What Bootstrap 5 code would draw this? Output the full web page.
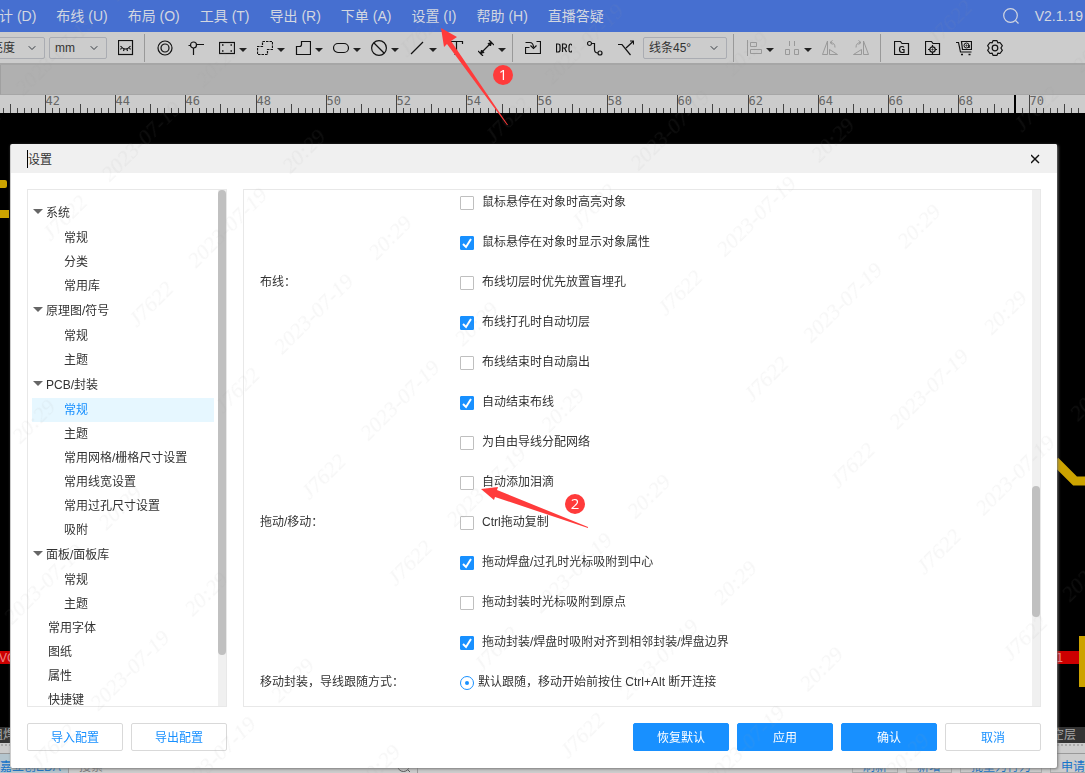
<!DOCTYPE html>
<html lang="zh-CN">
<head>
<meta charset="utf-8">
<meta name="viewport" content="width=device-width, initial-scale=1">
<title>设置</title>
<link href="https://cdn.jsdelivr.net/npm/bootstrap@5.3.0/dist/css/bootstrap.min.css" rel="stylesheet">
<style>
  body { font: 12px/18px "Liberation Sans", "Noto Sans CJK SC", sans-serif; color: #333; background: #000; }
  svg { display: block; flex: none; }

  .app-menu { height: 32px; background: #466fd0; font-size: 14px; padding-right: 2px; }
  .app-menu a, .app-menu button { color: #d3d7e0; text-decoration: none; white-space: nowrap; }
  .menu-list { gap: 20px; margin-left: -15px; }
  .bare { border: 0; padding: 0; background: none; color: inherit; }

  .tool-row { height: 33px; background: #ccc; border-bottom: 2px solid #a6a6a6; overflow: hidden; }
  .tool-row .form-select { height: 22px; flex: none; padding: 1px 20px 0 5px; font-size: 12px; line-height: 18px; color: #333;
    border: 1px solid #aaacb2; border-radius: 2px; background-color: #ccc; background-position: right 8px center; background-size: 8px; }
  .tool-row .layer-pick { width: 61px; margin-left: -16px; padding-left: 6px; }
  .unit-pick { width: 58px; }
  .tool-row .angle-pick { width: 84px; margin-left: 9px; }
  .hide-tool { margin: 0 10px 0 11px; }
  .tool-group { gap: 15px; }
  .drop-group { gap: 10px; }
  .tool { display: flex; align-items: center; gap: 4px; color: #111; }
  .tool svg.glyph { fill: none; stroke: currentColor; stroke-width: 1; }
  .tool.off svg.glyph { color: #999; }
  .arrow-down { border: 4px solid transparent; border-top-color: #222; border-bottom: 0; margin-top: 4px; }
  .divider { width: 1px; height: 28px; margin: 0 12px 0 6px; background: #999; flex: none; }
  .divider.lead-in { margin-left: 0; }
  .divider.wide { margin: 0 13px 0 11px; }

  .tab-strip { height: 30px; background: #b0b0b0; border-left: 1px solid #a0a0a0; border-bottom: 1px solid #a6a6a6; }
  .ruler { height: 18px; background: #ccc; overflow: hidden; }
  .ruler text { font: 12px "DejaVu Sans Mono", monospace; fill: #666; }

  .layer-bar { height: 16px; background: #333; color: #aaa; line-height: 17px; overflow: hidden; }
  .layer-bar span:first-child { margin-left: -9px; }
  .layer-bar span:last-child { margin-right: 9px; }
  .grip { height: 11px; background: radial-gradient(circle, #aaa 1px, transparent 1px) 0 0 / 4px 4px repeat-x, #ccc; border-bottom: 1px solid #999; }
  .dock { height: 19px; background: #ccc; overflow: hidden; line-height: 27px; color: #666; }
  .dock a, .dock button { color: #1673c9; text-decoration: none; line-height: 27px; }
  .dock-name { background: #b4c5ce; width: 69px; border-right: 1px solid #999; }
  .dock-search { width: 349px; padding: 0 6px 0 10px; border-right: 1px solid #999; }
  .dock-search input { border: 0; background: none; width: 100%; padding: 0; font-size: 12px; height: 27px; }
  .dock-search input::placeholder { color: #777; }
  .dock-actions { gap: 8px; }
  .dock-actions button { border: 1px solid #aaa; border-top: 0; padding: 0 10px; background: #ccc; white-space: nowrap; }
  .dock-actions button:last-child { padding-right: 0; border-right: 0; }

  .settings .modal-dialog { margin: 144px 28px 5px 10px; max-width: none; height: calc(100% - 149px); }
  .settings .modal-content { height: 100%; border: 0; border-left: 1px solid #ccc; border-radius: 2px; box-shadow: 1px 1px 3px #777; color: #333; }
  .settings .modal-header { height: 29px; padding: 0 17px 0 16px; background: #f0f0f0; border: 0; border-radius: 2px 2px 0 0; }
  .settings .modal-title { font-size: 12px; font-weight: 400; line-height: 16px; padding-top: 2px; border-left: 1px solid #000; }
  .settings .modal-body { padding: 16px; gap: 16px; min-height: 0; }
  .settings .modal-footer { padding: 0 16px 17px; gap: 8px; border: 0; }
  .settings .modal-footer > * { margin: 0; }
  .settings .btn { width: 96px; height: 28px; padding: 1px 0 0; font-size: 12px; line-height: 26px; border-radius: 2px; }
  .btn-fill { background: #1890ff; border-color: #1890ff; color: #fff; }
  .btn-line { background: #fff; border-color: #d9d9d9; color: #1890ff; }

  .pane { border: 1px solid #e8e8e8; min-height: 0; overflow: hidden; }
  .tree-pane { width: 200px; flex: none; }
  .tree { padding: 10px 4px 0; }
  .tree ul { padding: 0; margin: 0; list-style: none; }
  .tree a { display: block; height: 24px; line-height: 25px; padding-left: 16px; color: #333; text-decoration: none; white-space: nowrap; }
  .tree ul ul a { padding-left: 32px; }
  .tree a.active { background: #e6f7ff; color: #1890ff; }
  .branch { display: flex; align-items: center; gap: 3px; height: 26px; padding: 1px 0 0 1px; line-height: 25px; }
  .branch::before { content: ""; border: 5px solid transparent; border-top-color: #666; border-bottom: 0; margin-bottom: 4px; }
  .track { width: 8px; background: #f0f0f0; flex: none; }
  .thumb { background: #c0c0c0; border-radius: 4px; }
  .tree-thumb { height: 465px; }
  .form-thumb { height: 131px; margin-top: 296px; }

  .options { margin-top: -8px; padding-left: 16px; }
  .opt-row { height: 40px; }
  .opt-name { width: 200px; flex: none; }
  .opt-row .form-check-input { width: 14px; height: 14px; margin: 2px 8px 0 0; border: 1px solid #bfbfbf; float: none; flex: none; background-size: 14px; }
  .opt-row .form-check-input[type=checkbox] { border-radius: 1px; }
  .opt-row .form-check-input:checked { border-color: #1890ff; background-color: #1890ff; }
  .opt-row .form-check-input:checked[type=checkbox] { background-image: url("data:image/svg+xml,%3csvg xmlns='http://www.w3.org/2000/svg' viewBox='0 0 14 14'%3e%3cpath fill='none' stroke='%23fff' stroke-width='2' d='M3 8l3 3 5-8'/%3e%3c/svg%3e"); }
  .opt-row .form-check-input:checked[type=radio] { background-color: #fff; margin-right: 4px; background-image: url("data:image/svg+xml,%3csvg xmlns='http://www.w3.org/2000/svg' viewBox='0 0 14 14'%3e%3ccircle cx='7' cy='7' r='2' fill='%231890ff'/%3e%3c/svg%3e"); }

  .overlay { position: fixed; inset: 0; width: 100%; height: 100%; z-index: 1100; pointer-events: none; }
  .overlay .mark-no { font: 15px "Open Sans", sans-serif; fill: #fff; text-anchor: middle; }
  .overlay .stamp { font: italic 22px "Liberation Serif", "Noto Sans CJK SC", serif; fill: #a0a0a0; fill-opacity: .09; text-anchor: middle; }
</style>
</head>
<body class="vh-100 d-flex flex-column overflow-hidden">

<header class="app-menu d-flex align-items-center justify-content-between">
  <nav class="menu-list d-flex">
    <a href="#">设计 (D)</a><a href="#">布线 (U)</a><a href="#">布局 (O)</a><a href="#">工具 (T)</a><a href="#">导出 (R)</a><a href="#">下单 (A)</a><a href="#">设置 (I)</a><a href="#">帮助 (H)</a><a href="#">直播答疑</a>
  </nav>
  <div class="d-flex align-items-center gap-3">
    <button class="bare" type="button" aria-label="搜索"><svg width="16" height="16" fill="none" stroke="currentColor" stroke-width="1.200"><circle cx="7.500" cy="7.500" r="6.800"/><path d="M12.500 12.500l3 3"/></svg></button>
    <a href="#">V2.1.19</a>
  </div>
</header>

<div class="tool-row d-flex align-items-center">
  <select class="form-select layer-pick" aria-label="亮度"><option>亮度</option></select>
  <select class="form-select unit-pick ms-1" aria-label="单位"><option>mm</option></select>
  <button class="bare tool hide-tool" type="button" aria-label="隐藏"><svg class="glyph" width="16" height="16"><rect x=".5" y=".5" width="14" height="14" stroke-width="1.200"/><path d="M2.500 6c3 4 7 4 10 0M3.500 8l-1 1.500M6 9l-.5 2M9 9l.5 2M11.500 8l1 1.500" stroke-width="1.200"/></svg></button>
  <span class="divider lead-in"></span>
  <div class="tool-group d-flex align-items-center">
    <button class="bare tool" type="button" aria-label="焊盘"><svg class="glyph" width="16" height="16"><circle cx="8" cy="8" r="7" stroke-width="1.200"/><circle cx="8" cy="8" r="4" stroke-width="1.200"/></svg></button>
    <button class="bare tool" type="button" aria-label="过孔"><svg class="glyph" width="16" height="16"><circle cx="5.500" cy="5" r="3" stroke-width="1.200"/><path d="M8.500 4.500H16M5.500 8v7M2 5.500H.5" stroke-width="1.200"/></svg></button>
    <div class="drop-group d-flex align-items-center">
      <button class="bare tool" type="button" aria-label="板框"><svg class="glyph" width="16" height="16"><rect x=".5" y="2.500" width="15" height="11" stroke-width="1.200"/><path d="M3 5h1.500M11.500 5H13M3 11h1.500M11.500 11H13" stroke-width="1.500"/></svg><span class="arrow-down"></span></button>
      <button class="bare tool" type="button" aria-label="区域"><svg class="glyph" width="16" height="16"><path d="M5.500 1.500h10v8h-5v5h-10v-8h5z" stroke-width="1.200" stroke-dasharray="2.500 1"/></svg><span class="arrow-down"></span></button>
      <button class="bare tool" type="button" aria-label="铺铜"><svg class="glyph" width="16" height="16"><path d="M6.500 1.500h9v13H1.500v-8h3q2 0 2-2z" stroke-width="1.200"/></svg><span class="arrow-down"></span></button>
      <button class="bare tool" type="button" aria-label="槽"><svg class="glyph" width="16" height="16"><rect x=".5" y="3.500" width="15" height="9" rx="4.500" stroke-width="1.200"/></svg><span class="arrow-down"></span></button>
      <button class="bare tool" type="button" aria-label="禁止区域"><svg class="glyph" width="16" height="16"><circle cx="8" cy="8" r="7.400" stroke-width="1.200"/><path d="M3 3l10 10" stroke-width="1.200"/></svg><span class="arrow-down"></span></button>
      <button class="bare tool" type="button" aria-label="折线"><svg class="glyph" width="16" height="16"><path d="M2 14L14 2" stroke-width="1.200"/></svg><span class="arrow-down"></span></button>
      <button class="bare tool me-1" type="button" aria-label="文本"><svg class="glyph" width="17" height="16"><path d="M3.500 4V1.500h12V4M9.500 1.500v13M7.500 14.500h4" stroke-width="1.200"/></svg></button>
      <button class="bare tool" type="button" aria-label="尺寸"><svg class="glyph" width="16" height="16"><path d="M2 14L14 2M0 11l5 5M11 0l5 5" stroke-width="1.200"/><path d="M2.500 13.500l1-3.500 2.500 2.500zM13.500 2.500l-1 3.500L10 3.500z" fill="currentColor"/></svg><span class="arrow-down"></span></button>
    </div>
  </div>
  <span class="divider"></span>
  <div class="tool-group d-flex align-items-center">
    <button class="bare tool" type="button" aria-label="导入"><svg class="glyph" width="16" height="16"><path d="M4.500 7.500H.5v6h15v-12h-4M.5 2.500h4q4 0 4 5" stroke-width="1.200"/><path d="M5.500 5.500l3 3 3-3" stroke-width="1.200"/></svg></button>
    <button class="bare tool" type="button" aria-label="DRC"><svg class="glyph" width="16" height="16"><path d="M.5 4v8h1.500q2 0 2-2V6q0-2-2-2zM6.500 12V4h2.500q1.500 0 1.500 2t-1.500 2H6.500M8.500 8l2 4M16 5.500Q15.500 4 14.500 4T13 6v4q0 2 1.500 2t1.500-1.500" stroke-width="1.200"/></svg></button>
    <button class="bare tool" type="button" aria-label="布线"><svg class="glyph" width="16" height="16"><circle cx="2.500" cy="3.500" r="2" stroke-width="1.200"/><circle cx="13" cy="13" r="2" stroke-width="1.200"/><path d="M4.500 3.500h3v6q0 3.500 3.500 3.500" stroke-width="1.200"/></svg></button>
    <button class="bare tool" type="button" aria-label="推挤"><svg class="glyph" width="16" height="16"><path d="M0 4.500h4L12.500 15M8 8l7-6.500M12 1h3.500v3.500" stroke-width="1.200"/></svg></button>
  </div>
  <select class="form-select angle-pick" aria-label="线条角度"><option>线条45°</option></select>
  <span class="divider"></span>
  <div class="tool-group d-flex align-items-center">
    <div class="drop-group d-flex">
      <button class="bare tool off" type="button" aria-label="对齐"><svg class="glyph" width="16" height="16"><path d="M1.500 0v16M4.500 2.500h6v4h-6zM4.500 9.500h11v4h-11z"/></svg><span class="arrow-down"></span></button>
      <button class="bare tool off" type="button" aria-label="分布"><svg class="glyph" width="16" height="16"><path d="M5.500 1v5M10.500 1v5M1.500 9.500h4v5h-4zM10.500 9.500h4v5h-4z"/></svg><span class="arrow-down"></span></button>
      <button class="bare tool off" type="button" aria-label="左转"><svg class="glyph" width="16" height="16"><path d="M5.500 1v13.500h-5zM7.500 14.500v-5l8 5zM8 2.500q5 0 5 5M10.500.5l-2.500 2 2.500 2"/></svg></button>
    </div>
    <button class="bare tool off" type="button" aria-label="右转"><svg class="glyph" width="16" height="16"><path d="M10.500 1v13.500h5zM8.500 14.500v-5l-8 5zM8 2.500q-5 0-5 5M5.500.5l2.500 2-2.500 2"/></svg></button>
  </div>
  <span class="divider wide"></span>
  <div class="tool-group d-flex align-items-center">
    <button class="bare tool" type="button" aria-label="Gerber"><svg class="glyph" width="16" height="16"><path d="M.5 14.500V1.500h6l1.500 2h6.500v11zM10 7.500Q9.500 6.500 8 6.500q-2.500 0-2.500 3t2.500 3h2v-3H8" stroke-width="1.200"/></svg></button>
    <button class="bare tool" type="button" aria-label="坐标文件"><svg class="glyph" width="16" height="16"><path d="M.5 14.500V1.500h6l1.500 2h6.500v11zM7.500 5v2M7.500 12v2M3 9.500h2M10 9.500h2" stroke-width="1.200"/><circle cx="7.500" cy="9.500" r="2.700" stroke-width="1.200"/><circle cx="7.500" cy="9.500" r=".6"/></svg></button>
    <button class="bare tool" type="button" aria-label="下单"><svg class="glyph" width="16" height="16"><path d="M0 2.500h2.500l2 9.500h11M5.500 1.500h10v8H6.500z" stroke-width="1.200"/><circle cx="10.500" cy="5.500" r="2.500"/><circle cx="10.500" cy="5.500" r=".6"/><path d="M13 5v3M5 14.500h2M12.500 14.500h2" stroke-width="1.500"/></svg></button>
    <button class="bare tool" type="button" aria-label="设置"><svg class="glyph" width="16" height="16"><path d="M6 .6h4l.8 2.200 2.200-.3 2.300 3.200-1.400 2.300 1.400 2.300-2.300 3.200-2.200-.3-.8 2.200H6l-.8-2.200-2.200.3-2.300-3.200L2.100 8 .7 5.700 3 2.500l2.200.3z" stroke-width="1.200" stroke-linejoin="round"/><circle cx="8" cy="8" r="2.800" stroke-width="1.200"/></svg></button>
  </div>
</div>

<div class="tab-strip"></div>
<div class="ruler"><svg id="ruler" width="100%" height="18" aria-hidden="true"></svg></div>

<main class="flex-grow-1 d-flex justify-content-between overflow-hidden">
  <svg width="40" height="614"><path d="M0 67h5q2 0 2 2v4q0 2-2 2H0zM0 97h9v8H0z" fill="#cca300"/><path d="M0 538h40v13H0z" fill="#c00"/><text x="-1" y="549" font-size="12" fill="#e88">VCC</text></svg>
  <svg width="85" height="614"><path d="M55 348l20 20h10" fill="none" stroke="#cca300" stroke-width="9"/><path d="M0 538h79v13H0z" fill="#c00"/><path d="M79 523h6v51h-6z" fill="#cca300"/><text x="56" y="549" font-family="DejaVu Sans Mono" font-size="12" fill="#e88">1</text></svg>
</main>

<div class="layer-bar d-flex justify-content-between"><span>阻焊</span><span>挖空层</span></div>
<div class="grip"></div>
<footer class="dock d-flex">
  <a class="dock-name" href="#">嘉立创EDA</a>
  <div class="dock-search d-flex align-items-start"><input type="text" placeholder="搜索" aria-label="搜索"><svg class="mt-1" width="14" height="14" fill="none" stroke="#555"><circle cx="6.500" cy="7.500" r="6"/><path d="M10.500 11.500l3 3"/></svg></div>
  <div class="dock-actions d-flex ms-auto"><button type="button">刷新</button><button type="button">新增</button><button type="button">批量为行为</button><button type="button">申请</button></div>
</footer>

<div class="modal settings d-block overflow-hidden" tabindex="-1" role="dialog" aria-labelledby="settings-title">
  <div class="modal-dialog">
    <div class="modal-content">
      <div class="modal-header">
        <h1 class="modal-title" id="settings-title">设置</h1>
        <button class="bare" type="button" aria-label="关闭"><svg width="9" height="10" stroke="#111" stroke-width="1.400"><path d="M0 1l8 8M8 1L0 9"/></svg></button>
      </div>
      <div class="modal-body d-flex">
        <div class="pane tree-pane d-flex">
          <nav class="tree flex-grow-1">
            <ul>
              <li><button class="bare branch" type="button">系统</button>
                <ul><li><a href="#">常规</a></li><li><a href="#">分类</a></li><li><a href="#">常用库</a></li></ul></li>
              <li><button class="bare branch" type="button">原理图/符号</button>
                <ul><li><a href="#">常规</a></li><li><a href="#">主题</a></li></ul></li>
              <li><button class="bare branch" type="button">PCB/封装</button>
                <ul><li><a class="active" href="#">常规</a></li><li><a href="#">主题</a></li><li><a href="#">常用网格/栅格尺寸设置</a></li><li><a href="#">常用线宽设置</a></li><li><a href="#">常用过孔尺寸设置</a></li><li><a href="#">吸附</a></li></ul></li>
              <li><button class="bare branch" type="button">面板/面板库</button>
                <ul><li><a href="#">常规</a></li><li><a href="#">主题</a></li></ul></li>
              <li><a href="#">常用字体</a></li><li><a href="#">图纸</a></li><li><a href="#">属性</a></li><li><a href="#">快捷键</a></li>
            </ul>
          </nav>
          <div class="track"><div class="thumb tree-thumb"></div></div>
        </div>
        <div class="pane flex-grow-1 d-flex">
          <form class="options flex-grow-1">
            <div class="opt-row d-flex align-items-center"><span class="opt-name"></span><input class="form-check-input" type="checkbox" id="o1"><label for="o1">鼠标悬停在对象时高亮对象</label></div>
            <div class="opt-row d-flex align-items-center"><span class="opt-name"></span><input class="form-check-input" type="checkbox" id="o2" checked><label for="o2">鼠标悬停在对象时显示对象属性</label></div>
            <div class="opt-row d-flex align-items-center"><span class="opt-name">布线：</span><input class="form-check-input" type="checkbox" id="o3"><label for="o3">布线切层时优先放置盲埋孔</label></div>
            <div class="opt-row d-flex align-items-center"><span class="opt-name"></span><input class="form-check-input" type="checkbox" id="o4" checked><label for="o4">布线打孔时自动切层</label></div>
            <div class="opt-row d-flex align-items-center"><span class="opt-name"></span><input class="form-check-input" type="checkbox" id="o5"><label for="o5">布线结束时自动扇出</label></div>
            <div class="opt-row d-flex align-items-center"><span class="opt-name"></span><input class="form-check-input" type="checkbox" id="o6" checked><label for="o6">自动结束布线</label></div>
            <div class="opt-row d-flex align-items-center"><span class="opt-name"></span><input class="form-check-input" type="checkbox" id="o7"><label for="o7">为自由导线分配网络</label></div>
            <div class="opt-row d-flex align-items-center"><span class="opt-name"></span><input class="form-check-input" type="checkbox" id="o8"><label for="o8">自动添加泪滴</label></div>
            <div class="opt-row d-flex align-items-center"><span class="opt-name">拖动/移动：</span><input class="form-check-input" type="checkbox" id="o9"><label for="o9">Ctrl拖动复制</label></div>
            <div class="opt-row d-flex align-items-center"><span class="opt-name"></span><input class="form-check-input" type="checkbox" id="o10" checked><label for="o10">拖动焊盘/过孔时光标吸附到中心</label></div>
            <div class="opt-row d-flex align-items-center"><span class="opt-name"></span><input class="form-check-input" type="checkbox" id="o11"><label for="o11">拖动封装时光标吸附到原点</label></div>
            <div class="opt-row d-flex align-items-center"><span class="opt-name"></span><input class="form-check-input" type="checkbox" id="o12" checked><label for="o12">拖动封装/焊盘时吸附对齐到相邻封装/焊盘边界</label></div>
            <div class="opt-row d-flex align-items-center"><span class="opt-name">移动封装，导线跟随方式：</span><input class="form-check-input" type="radio" name="follow" id="o13" checked><label for="o13">默认跟随，移动开始前按住 Ctrl+Alt 断开连接</label></div>
          </form>
          <div class="track"><div class="thumb form-thumb"></div></div>
        </div>
      </div>
      <div class="modal-footer flex-nowrap justify-content-start">
        <button class="btn btn-line" type="button">导入配置</button>
        <button class="btn btn-line me-auto" type="button">导出配置</button>
        <button class="btn btn-fill" type="button">恢复默认</button>
        <button class="btn btn-fill" type="button">应用</button>
        <button class="btn btn-fill" type="button">确认</button>
        <button class="btn btn-line" type="button">取消</button>
      </div>
    </div>
  </div>
</div>

<!-- Page watermark and the two step annotations -->
<svg class="overlay" aria-hidden="true">
  <defs>
    <pattern id="stamps" width="382" height="122" patternUnits="userSpaceOnUse" patternTransform="translate(151 304) rotate(-45) translate(-60 -61)">
      <text class="stamp" x="60" y="68">J7622</text>
      <text class="stamp" x="168" y="68">2023-07-19</text>
      <text class="stamp" x="276" y="68">20:29</text>
    </pattern>
  </defs>
  <rect width="100%" height="100%" fill="url(#stamps)"/>
  <g fill="#ff3b3b">
    <path d="M441 28l16 9-6 4 57 84h-1l-60-81-3 3z"/>
    <circle cx="503" cy="75" r="10"/>
    <path d="M481 489l17-2-1 3 91 37v1l-93-31-1 3z"/>
    <circle cx="575" cy="504" r="10"/>
  </g>
  <text class="mark-no" x="503" y="80">1</text>
  <text class="mark-no" x="575" y="509">2</text>
</svg>

<script src="https://cdn.jsdelivr.net/npm/bootstrap@5.3.0/dist/js/bootstrap.bundle.min.js"></script>
<script>
  // Ruler: ten ticks for every two millimetres, a number on each long tick
  const ruler = document.getElementById('ruler');
  const step = 984 / 140, origin = 45;
  let marks = '';
  for (let i = -7; origin + i * step < ruler.clientWidth; i++) {
    const x = Math.round(origin + i * step - 0.3) + 0.5;
    const long = i % 10 === 0;
    const top = long ? 0 : i % 5 === 0 ? 9 : 13;
    marks += `<path d="M${x} ${top}V18" stroke="#444"/>`;
    if (long) marks += `<text x="${x}" y="10">${42 + i / 5}</text>`;
  }
  ruler.innerHTML = marks + '<path d="M1015 0V18" stroke="#000" stroke-width="2"/>';
</script>
</body>
</html>
